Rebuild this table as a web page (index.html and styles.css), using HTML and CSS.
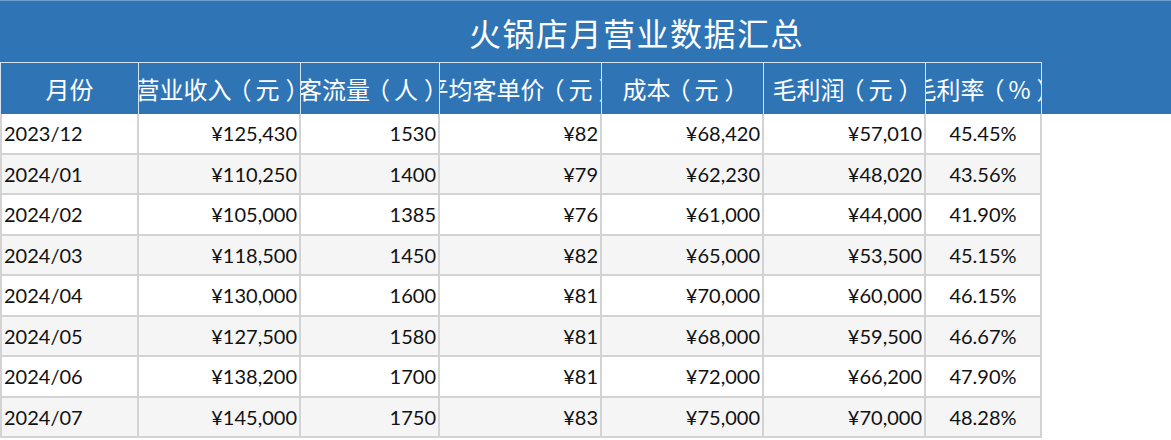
FILE: index.html
```html
<!DOCTYPE html>
<html lang="zh">
<head>
<meta charset="utf-8">
<title>火锅店月营业数据汇总</title>
<link rel="stylesheet" href="styles.css">
</head>
<body>
<div class="sheet">
  <div class="title">火锅店月营业数据汇总</div>
  <div class="cols head">
    <div class="th"><span>月份</span></div>
    <div class="th"><span>营业收入<i class="po">（</i>元<i class="pc">）</i></span></div>
    <div class="th"><span>客流量<i class="po">（</i>人<i class="pc">）</i></span></div>
    <div class="th"><span>平均客单价<i class="po">（</i>元<i class="pc">）</i></span></div>
    <div class="th"><span>成本<i class="po">（</i>元<i class="pc">）</i></span></div>
    <div class="th"><span>毛利润<i class="po">（</i>元<i class="pc">）</i></span></div>
    <div class="th"><span>毛利率<i class="po">（</i>%<i class="pc">）</i></span></div>
  </div>
  <div class="body">
    <div class="cols row"><div class="td l">2023/12</div><div class="td">¥125,430</div><div class="td">1530</div><div class="td">¥82</div><div class="td">¥68,420</div><div class="td">¥57,010</div><div class="td c">45.45%</div></div>
    <div class="cols row"><div class="td l">2024/01</div><div class="td">¥110,250</div><div class="td">1400</div><div class="td">¥79</div><div class="td">¥62,230</div><div class="td">¥48,020</div><div class="td c">43.56%</div></div>
    <div class="cols row"><div class="td l">2024/02</div><div class="td">¥105,000</div><div class="td">1385</div><div class="td">¥76</div><div class="td">¥61,000</div><div class="td">¥44,000</div><div class="td c">41.90%</div></div>
    <div class="cols row"><div class="td l">2024/03</div><div class="td">¥118,500</div><div class="td">1450</div><div class="td">¥82</div><div class="td">¥65,000</div><div class="td">¥53,500</div><div class="td c">45.15%</div></div>
    <div class="cols row"><div class="td l">2024/04</div><div class="td">¥130,000</div><div class="td">1600</div><div class="td">¥81</div><div class="td">¥70,000</div><div class="td">¥60,000</div><div class="td c">46.15%</div></div>
    <div class="cols row"><div class="td l">2024/05</div><div class="td">¥127,500</div><div class="td">1580</div><div class="td">¥81</div><div class="td">¥68,000</div><div class="td">¥59,500</div><div class="td c">46.67%</div></div>
    <div class="cols row"><div class="td l">2024/06</div><div class="td">¥138,200</div><div class="td">1700</div><div class="td">¥81</div><div class="td">¥72,000</div><div class="td">¥66,200</div><div class="td c">47.90%</div></div>
    <div class="cols row"><div class="td l">2024/07</div><div class="td">¥145,000</div><div class="td">1750</div><div class="td">¥83</div><div class="td">¥75,000</div><div class="td">¥70,000</div><div class="td c">48.28%</div></div>
  </div>
</div>
</body>
</html>
```
FILE: styles.css
```css
html, body {
  margin: 0;
  padding: 0;
  background: #ffffff;
  overflow: hidden;
}

.sheet {
  width: 1171px;
  height: 440px;
  font-family: "Lato", "Noto Sans CJK SC", sans-serif;
  background: linear-gradient(to bottom, #2f75b6 0, #2f75b6 114px, #ffffff 114px);
}

.title {
  height: 62px;
  box-sizing: border-box;
  border-top: 1px solid #6d9fd0;
  padding-left: 102px;
  display: flex;
  align-items: center;
  justify-content: center;
  color: #ffffff;
  font-family: "Noto Sans CJK SC", sans-serif;
  font-size: 32px;
  letter-spacing: 1.5px;
}

.cols {
  display: grid;
  grid-template-columns: 139px 162px 139px 162px 162px 162px 116px;
  width: 1042px;
}

.head {
  height: 52px;
  box-sizing: border-box;
  border-top: 1px solid #d5e3f2;
}

.th {
  box-sizing: border-box;
  border-right: 1px solid #d5e3f2;
  display: flex;
  align-items: center;
  justify-content: center;
  overflow: hidden;
  white-space: nowrap;
  color: #ffffff;
  font-family: "Noto Sans CJK SC", sans-serif;
  font-size: 24px;
}

.th:first-child {
  border-left: 1px solid #d5e3f2;
}

.th span {
  flex: none;
}

.th i {
  font-style: normal;
  display: inline-block;
}

.th .po {
  transform: translateX(-4px);
}

.th .pc {
  transform: translateX(6px);
}

.row {
  height: 40.5px;
  box-sizing: border-box;
  border-bottom: 2px solid #d3d3d3;
  background: #ffffff;
}

.row:nth-child(even) {
  background: #f5f5f5;
}

.td {
  box-sizing: border-box;
  border-right: 2px solid #d3d3d3;
  display: flex;
  align-items: center;
  justify-content: flex-end;
  padding-right: 2px;
  color: #111111;
  font-size: 20px;
  white-space: nowrap;
  overflow: hidden;
}

.td.l {
  justify-content: flex-start;
  padding-left: 2px;
  border-left: 2px solid #d3d3d3;
}

.td.c {
  justify-content: center;
  padding-right: 0;
}
```
